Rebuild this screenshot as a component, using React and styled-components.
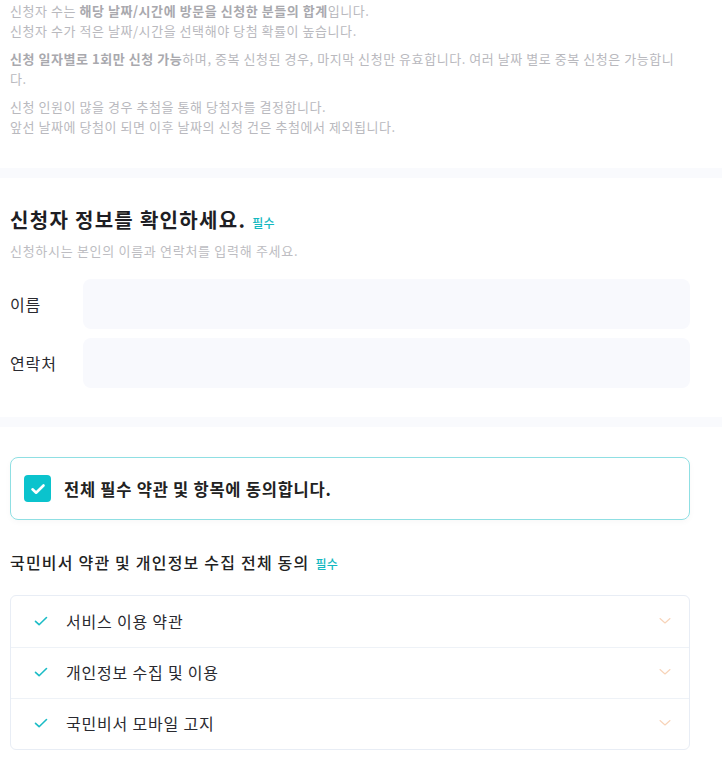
import React from 'react'
import styled, { createGlobalStyle } from 'styled-components'

const Global = createGlobalStyle`
  body {
    margin: 0;
    background: #fff;
    font-family: "Noto Sans CJK KR", "Noto Sans", sans-serif;
    color: #222;
  }
`

const Page = styled.div`
  width: 722px;
`

const Notice = styled.section`
  padding: 1px 40px 31px 10px;
  font-size: 13px;
  line-height: 20px;
  color: #b9b9be;
  letter-spacing: 0.55px;

  p {
    margin: 0 0 8px;
  }
  p:last-child {
    margin-bottom: 0;
  }
  b {
    color: #a9a9ae;
    font-weight: 700;
  }
`

const Band = styled.div`
  height: 10px;
  background: #f9fafd;
`

const Section = styled.section`
  padding: ${p => p.$pad || '30px 10px 30px'};
`

const Heading = styled.h2`
  margin: 0;
  font-size: 20px;
  line-height: 28px;
  font-weight: 700;
  color: #1e1e24;
  display: flex;
  align-items: baseline;
  gap: 6px;
  letter-spacing: 1.3px;
`

const Required = styled.span`
  font-size: 12px;
  font-weight: 500;
  letter-spacing: 0.3px;
  color: #12b8c0;
`

const Sub = styled.p`
  margin: 4px 0 18px;
  font-size: 13px;
  line-height: 20px;
  letter-spacing: 0.7px;
  color: #bdbdc2;
`

const Field = styled.div`
  display: grid;
  grid-template-columns: 73px 1fr;
  align-items: center;
  margin-bottom: 9px;
  padding-right: 22px;
`

const Label = styled.label`
  font-size: 16px;
  letter-spacing: 0.9px;
  color: #2a2a30;
`

const Input = styled.input`
  height: 50px;
  border: none;
  border-radius: 8px;
  background: #f8f9fd;
  outline: none;
  padding: 0 14px;
  font: inherit;
`

const AllAgree = styled.div`
  margin: 0 22px 0 0;
  height: 63px;
  border: 1px solid #8fdfe3;
  border-radius: 8px;
  box-sizing: border-box;
  display: flex;
  align-items: center;
  gap: 13px;
  padding: 0 13px;
  font-size: 16.5px;
  letter-spacing: 0.75px;
  font-weight: 700;
  color: #222;
  box-shadow: 0 2px 6px rgba(0, 0, 0, 0.03);
`

const Box = styled.span`
  width: 27px;
  height: 27px;
  border-radius: 4px;
  background: #0bc3cd;
  display: flex;
  align-items: center;
  justify-content: center;
`

const GroupTitle = styled.h3`
  margin: 30px 0 19px;
  font-size: 16px;
  line-height: 24px;
  letter-spacing: 1.2px;
  font-weight: 500;
  color: #222;
  display: flex;
  align-items: baseline;
  gap: 6px;
`

const List = styled.ul`
  list-style: none;
  margin: 0 22px 0 0;
  padding: 0;
  border: 1px solid #e8edf5;
  border-radius: 6px;
`

const Item = styled.li`
  height: 51px;
  display: flex;
  align-items: center;
  padding: 0 18px 2px 22px;
  font-size: 16px;
  letter-spacing: 0.8px;
  color: #2a2a30;
  border-top: ${p => (p.$first ? 'none' : '1px solid #eef2f7')};
  box-sizing: border-box;

  span {
    flex: 1;
    margin-left: 17px;
  }
`

const Check = ({ color = '#fff', size = 16, w = 2.6 }) => (
  <svg width={size} height={size} viewBox="0 0 16 16" fill="none">
    <path d="M2.5 8.3l3.6 3.4L13.5 4.5" stroke={color} strokeWidth={w} strokeLinecap="round" strokeLinejoin="round" />
  </svg>
)

const Chevron = () => (
  <svg width="12" height="8" viewBox="0 0 12 8" fill="none">
    <path d="M1 1.5l5 4.5 5-4.5" stroke="#f7d3b8" strokeWidth="1.1" strokeLinecap="round" strokeLinejoin="round" />
  </svg>
)

const terms = ['서비스 이용 약관', '개인정보 수집 및 이용', '국민비서 모바일 고지']

export default function App() {
  return (
    <Page>
      <Global />
      <Notice>
        <p>
          신청자 수는 <b>해당 날짜/시간에 방문을 신청한 분들의 합계</b>입니다.<br />
          신청자 수가 적은 날짜/시간을 선택해야 당첨 확률이 높습니다.
        </p>
        <p>
          <b>신청 일자별로 1회만 신청 가능</b>하며, 중복 신청된 경우, 마지막 신청만 유효합니다. 여러 날짜 별로 중복 신청은 가능합니다.
        </p>
        <p>
          신청 인원이 많을 경우 추첨을 통해 당첨자를 결정합니다.<br />
          앞선 날짜에 당첨이 되면 이후 날짜의 신청 건은 추첨에서 제외됩니다.
        </p>
      </Notice>
      <Band />
      <Section $pad="28px 10px 20px">
        <Heading>
          신청자 정보를 확인하세요.<Required>필수</Required>
        </Heading>
        <Sub>신청하시는 본인의 이름과 연락처를 입력해 주세요.</Sub>
        <Field>
          <Label>이름</Label>
          <Input />
        </Field>
        <Field>
          <Label>연락처</Label>
          <Input />
        </Field>
      </Section>
      <Band />
      <Section $pad="30px 10px 30px">
        <AllAgree>
          <Box>
            <Check />
          </Box>
          전체 필수 약관 및 항목에 동의합니다.
        </AllAgree>
        <GroupTitle>
          국민비서 약관 및 개인정보 수집 전체 동의<Required>필수</Required>
        </GroupTitle>
        <List>
          {terms.map((t, i) => (
            <Item key={t} $first={i === 0}>
              <Check color="#1bbcc6" size={16} w={1.6} />
              <span>{t}</span>
              <Chevron />
            </Item>
          ))}
        </List>
      </Section>
    </Page>
  )
}
